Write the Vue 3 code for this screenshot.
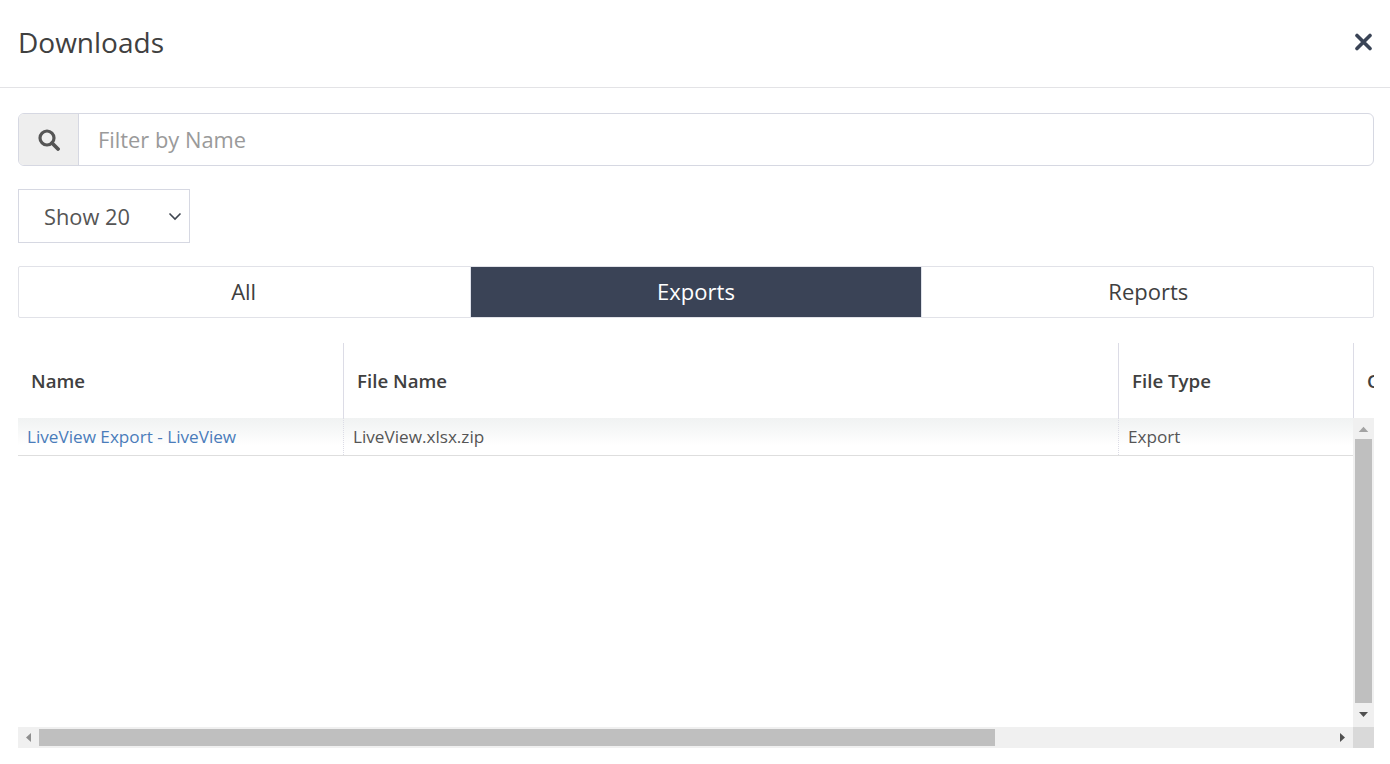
<script setup>
const tabs = [
  { label: 'All', active: false },
  { label: 'Exports', active: true },
  { label: 'Reports', active: false },
]
</script>

<template>
  <div class="page">
    <header class="header">
      <h1 class="title">Downloads</h1>
      <svg class="close" width="18" height="18" viewBox="0 0 18 18" aria-label="Close">
        <path d="M3 2.5L16 15.5M16 2.5L3 15.5" stroke="#3a4456" stroke-width="3.6" stroke-linecap="round" fill="none" />
      </svg>
    </header>
    <main class="body">
      <div class="search">
        <div class="search-addon">
          <svg width="22" height="22" viewBox="0 0 22 22">
            <circle cx="9" cy="9" r="7" fill="none" stroke="#555" stroke-width="3.2" />
            <path d="M14 14L20 20" stroke="#555" stroke-width="3.8" stroke-linecap="round" />
          </svg>
        </div>
        <div class="search-input">Filter by Name</div>
      </div>
      <div class="select">
        <span>Show 20</span>
        <svg width="14" height="9" viewBox="0 0 14 9">
          <path d="M1.5 1.5L7 7L12.5 1.5" fill="none" stroke="#3f4650" stroke-width="1.6" />
        </svg>
      </div>
      <div class="tabs">
        <div v-for="t in tabs" :key="t.label" class="tab" :class="{ active: t.active }">{{ t.label }}</div>
      </div>
      <div class="grid">
        <div class="grid-head">
          <div class="hcell c1">Name</div>
          <div class="hcell c2">File Name</div>
          <div class="hcell c3">File Type</div>
          <div class="hcell c4">Created</div>
        </div>
        <div class="grid-mid">
          <div class="grid-rows">
            <div class="row">
              <div class="cell c1"><a class="link">LiveView Export - LiveView</a></div>
              <div class="cell c2">LiveView.xlsx.zip</div>
              <div class="cell c3">Export</div>
            </div>
          </div>
          <div class="vbar">
            <svg class="arrow" width="21" height="21" viewBox="0 0 21 21"><path d="M5.75 14L10.5 8.75L15.25 14Z" fill="#a3a3a3" /></svg>
            <div class="vthumb"></div>
            <svg class="arrow" width="21" height="24" viewBox="0 0 21 24"><path d="M6 9L15 9L10.5 14Z" fill="#505050" /></svg>
          </div>
        </div>
        <div class="hbar">
          <svg class="arrow" width="21" height="21" viewBox="0 0 21 21"><path d="M13 6L13 15L8 10.5Z" fill="#8f8f8f" /></svg>
          <div class="htrack"><div class="hthumb"></div></div>
          <svg class="arrow" width="21" height="21" viewBox="0 0 21 21"><path d="M8 6L8 15L13 10.5Z" fill="#505050" /></svg>
          <div class="corner"></div>
        </div>
      </div>
    </main>
  </div>
</template>

<style>
html, body { margin: 0; background: #fff; }
</style>

<style scoped>
.page {
  width: 1390px;
  height: 764px;
  overflow: hidden;
  font-family: "Open Sans", "Liberation Sans", sans-serif;
  color: #404040;
  background: #fff;
}
.header {
  height: 87px;
  border-bottom: 1px solid #e3e3e6;
  display: flex;
  align-items: center;
  justify-content: space-between;
  padding: 0 18px;
}
.title {
  margin: -4px 0 0;
  font-size: 28px;
  font-weight: 400;
  color: #404040;
}
.close { display: block; margin-top: -4px; }
.body {
  padding: 25px 16px 0 18px;
  display: flex;
  flex-direction: column;
}
.search {
  height: 53px;
  box-sizing: border-box;
  display: flex;
  border: 1px solid #d6d8e2;
  border-radius: 6px;
  overflow: hidden;
}
.search-addon {
  width: 59px;
  background: #eeeeee;
  border-right: 1px solid #d6d8e2;
  display: flex;
  align-items: center;
  justify-content: center;
}
.search-input {
  flex: 1;
  padding-left: 19px;
  font-size: 21.85px;
  line-height: 51px;
  color: #9a9a9a;
}
.select {
  margin-top: 23px;
  width: 172px;
  height: 54px;
  box-sizing: border-box;
  border: 1px solid #d6d8e2;
  display: flex;
  align-items: center;
  justify-content: space-between;
  padding: 0 7px 0 25px;
  font-size: 21.8px;
  color: #555;
}
.tabs {
  margin-top: 23px;
  height: 52px;
  display: grid;
  grid-template-columns: repeat(3, 1fr);
  box-sizing: border-box;
  border: 1px solid #e1e2e8;
  border-radius: 2px;
}
.tab {
  box-sizing: border-box;
  display: flex;
  align-items: center;
  justify-content: center;
  padding-bottom: 2px;
  font-size: 22px;
  color: #404040;
}
.tab:first-child { padding-right: 2px; }
.tab:last-child { padding-left: 2px; }
.tab.active {
  background: #3a4356;
  color: #fff;
  border-left: 1px solid #dfe2ea;
  border-right: 1px solid #dfe2ea;
}
.grid {
  margin-top: 25px;
  display: flex;
  flex-direction: column;
}
.grid-head {
  height: 75px;
  display: flex;
  overflow: hidden;
}
.hcell {
  flex: none;
  box-sizing: border-box;
  padding-left: 13px;
  padding-top: 25px;
  font-size: 18.7px;
  font-weight: 600;
  color: #404040;
  border-right: 1px solid #dcdce6;
  white-space: nowrap;
}
.c1 { width: 326px; }
.c2 { width: 775px; }
.c3 { width: 235px; }
.c4 { width: 200px; border-right: 0; }
.grid-mid {
  height: 309px;
  display: flex;
}
.grid-rows {
  width: 1335px;
  background: #fff;
  overflow: hidden;
}
.row {
  height: 37px;
  display: flex;
  border-bottom: 1px solid #dedede;
  background: linear-gradient(#f0f2f2, #ffffff 75%);
}
.cell {
  flex: none;
  box-sizing: border-box;
  height: 37px;
  padding-left: 9px;
  font-size: 17.15px;
  line-height: 38px;
  color: #555;
  border-right: 1px dotted #dcdce6;
  white-space: nowrap;
}
.cell.c3 { border-right: 0; }
.link { color: #4a7cba; }
.vbar {
  width: 21px;
  background: #f0f0f0;
  display: flex;
  flex-direction: column;
}
.vthumb {
  margin-left: 2px;
  width: 17px;
  flex: 1;
  background: #bfbfbf;
}
.arrow { display: block; flex: none; }
.hbar {
  height: 21px;
  display: flex;
  background: #f0f0f0;
}
.htrack {
  flex: 1;
  padding: 2px 0;
  box-sizing: border-box;
}
.hthumb {
  width: 956px;
  height: 17px;
  background: #bfbfbf;
}
.corner {
  width: 21px;
  background: #d9d9d9;
}
</style>
